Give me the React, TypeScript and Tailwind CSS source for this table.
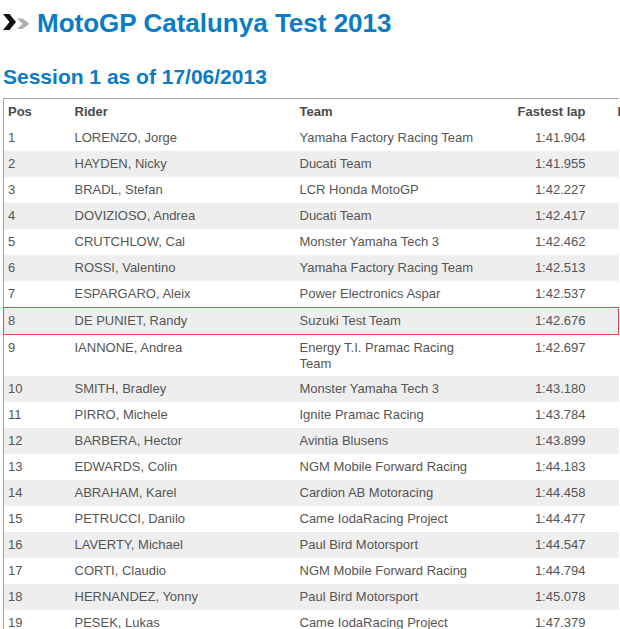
import React from "react"

type Row = [number, string, string, string]

const rows: Row[] = [
  [1, "LORENZO, Jorge", "Yamaha Factory Racing Team", "1:41.904"],
  [2, "HAYDEN, Nicky", "Ducati Team", "1:41.955"],
  [3, "BRADL, Stefan", "LCR Honda MotoGP", "1:42.227"],
  [4, "DOVIZIOSO, Andrea", "Ducati Team", "1:42.417"],
  [5, "CRUTCHLOW, Cal", "Monster Yamaha Tech 3", "1:42.462"],
  [6, "ROSSI, Valentino", "Yamaha Factory Racing Team", "1:42.513"],
  [7, "ESPARGARO, Aleix", "Power Electronics Aspar", "1:42.537"],
  [8, "DE PUNIET, Randy", "Suzuki Test Team", "1:42.676"],
  [9, "IANNONE, Andrea", "Energy T.I. Pramac Racing Team", "1:42.697"],
  [10, "SMITH, Bradley", "Monster Yamaha Tech 3", "1:43.180"],
  [11, "PIRRO, Michele", "Ignite Pramac Racing", "1:43.784"],
  [12, "BARBERA, Hector", "Avintia Blusens", "1:43.899"],
  [13, "EDWARDS, Colin", "NGM Mobile Forward Racing", "1:44.183"],
  [14, "ABRAHAM, Karel", "Cardion AB Motoracing", "1:44.458"],
  [15, "PETRUCCI, Danilo", "Came IodaRacing Project", "1:44.477"],
  [16, "LAVERTY, Michael", "Paul Bird Motorsport", "1:44.547"],
  [17, "CORTI, Claudio", "NGM Mobile Forward Racing", "1:44.794"],
  [18, "HERNANDEZ, Yonny", "Paul Bird Motorsport", "1:45.078"],
  [19, "PESEK, Lukas", "Came IodaRacing Project", "1:47.379"],
]

const HIGHLIGHT = 8

function Chevrons() {
  return (
    <svg width="28" height="18" viewBox="0 0 28 18" className="shrink-0">
      <polygon points="0,0 6.5,0 13,8 6.5,16 0,16 6.5,8" fill="#111" />
      <polygon points="14,4.5 19.5,4.5 26.5,9.75 19.5,15 14,15 19.5,9.75" fill="#b0b0b0" />
    </svg>
  )
}

export default function App() {
  return (
    <div
      className="w-[620px] h-[629px] overflow-hidden bg-white text-[#555]"
      style={{ fontFamily: '"Liberation Sans", Arial, sans-serif' }}
    >
      {/* Title */}
      <div className="flex items-center gap-[6px] pl-[3px] pt-[8px]">
        <Chevrons />
        <h1 className="text-[26px] leading-[30px] font-bold text-[#0a7cc5] whitespace-nowrap">
          MotoGP Catalunya Test 2013
        </h1>
      </div>

      <h2 className="mt-[27px] pl-[3px] text-[21px] leading-[24px] font-bold text-[#0a7cc5] whitespace-nowrap">
        Session 1 as of 17/06/2013
      </h2>

      {/* Results */}
      <table className="mt-[9px] ml-[3px] table-fixed w-[615px] border-l border-t border-[#a3a3a3] text-[13px] leading-4">
        <colgroup>
          <col className="w-[67px]" />
          <col className="w-[225px]" />
          <col className="w-[195px]" />
          <col className="w-[100px]" />
          <col className="w-[28px]" />
        </colgroup>
        <thead>
          <tr className="text-[#4a4a4a] font-bold">
            <th className="text-left pl-[4px] pt-[5px] pb-[5px]">Pos</th>
            <th className="text-left pl-[4px]">Rider</th>
            <th className="text-left pl-[4px]">Team</th>
            <th className="text-right pr-[5px] whitespace-nowrap">Fastest lap</th>
            <th className="text-left pl-[27px] whitespace-nowrap overflow-visible">Laps</th>
          </tr>
        </thead>
        <tbody>
          {rows.map(([pos, rider, team, lap]) => {
            const hl = pos === HIGHLIGHT
            const edge = hl ? "border-y border-[#e5484d]" : ""
            return (
              <tr key={pos} className={pos % 2 === 0 ? "bg-[#eeeeee]" : "bg-white"}>
                <td className={`align-top pl-[4px] pt-[5px] pb-[5px] ${edge} ${hl ? "border-l" : ""}`}>{pos}</td>
                <td className={`align-top pl-[4px] pt-[5px] ${edge}`}>{rider}</td>
                <td className={`align-top pl-[4px] pr-[4px] pt-[5px] pb-[4px] ${edge}`}>{team}</td>
                <td className={`align-top text-right pr-[5px] pt-[5px] ${edge}`}>{lap}</td>
                <td className={`align-top pt-[5px] ${edge} ${hl ? "border-r" : ""}`}></td>
              </tr>
            )
          })}
        </tbody>
      </table>
    </div>
  )
}
